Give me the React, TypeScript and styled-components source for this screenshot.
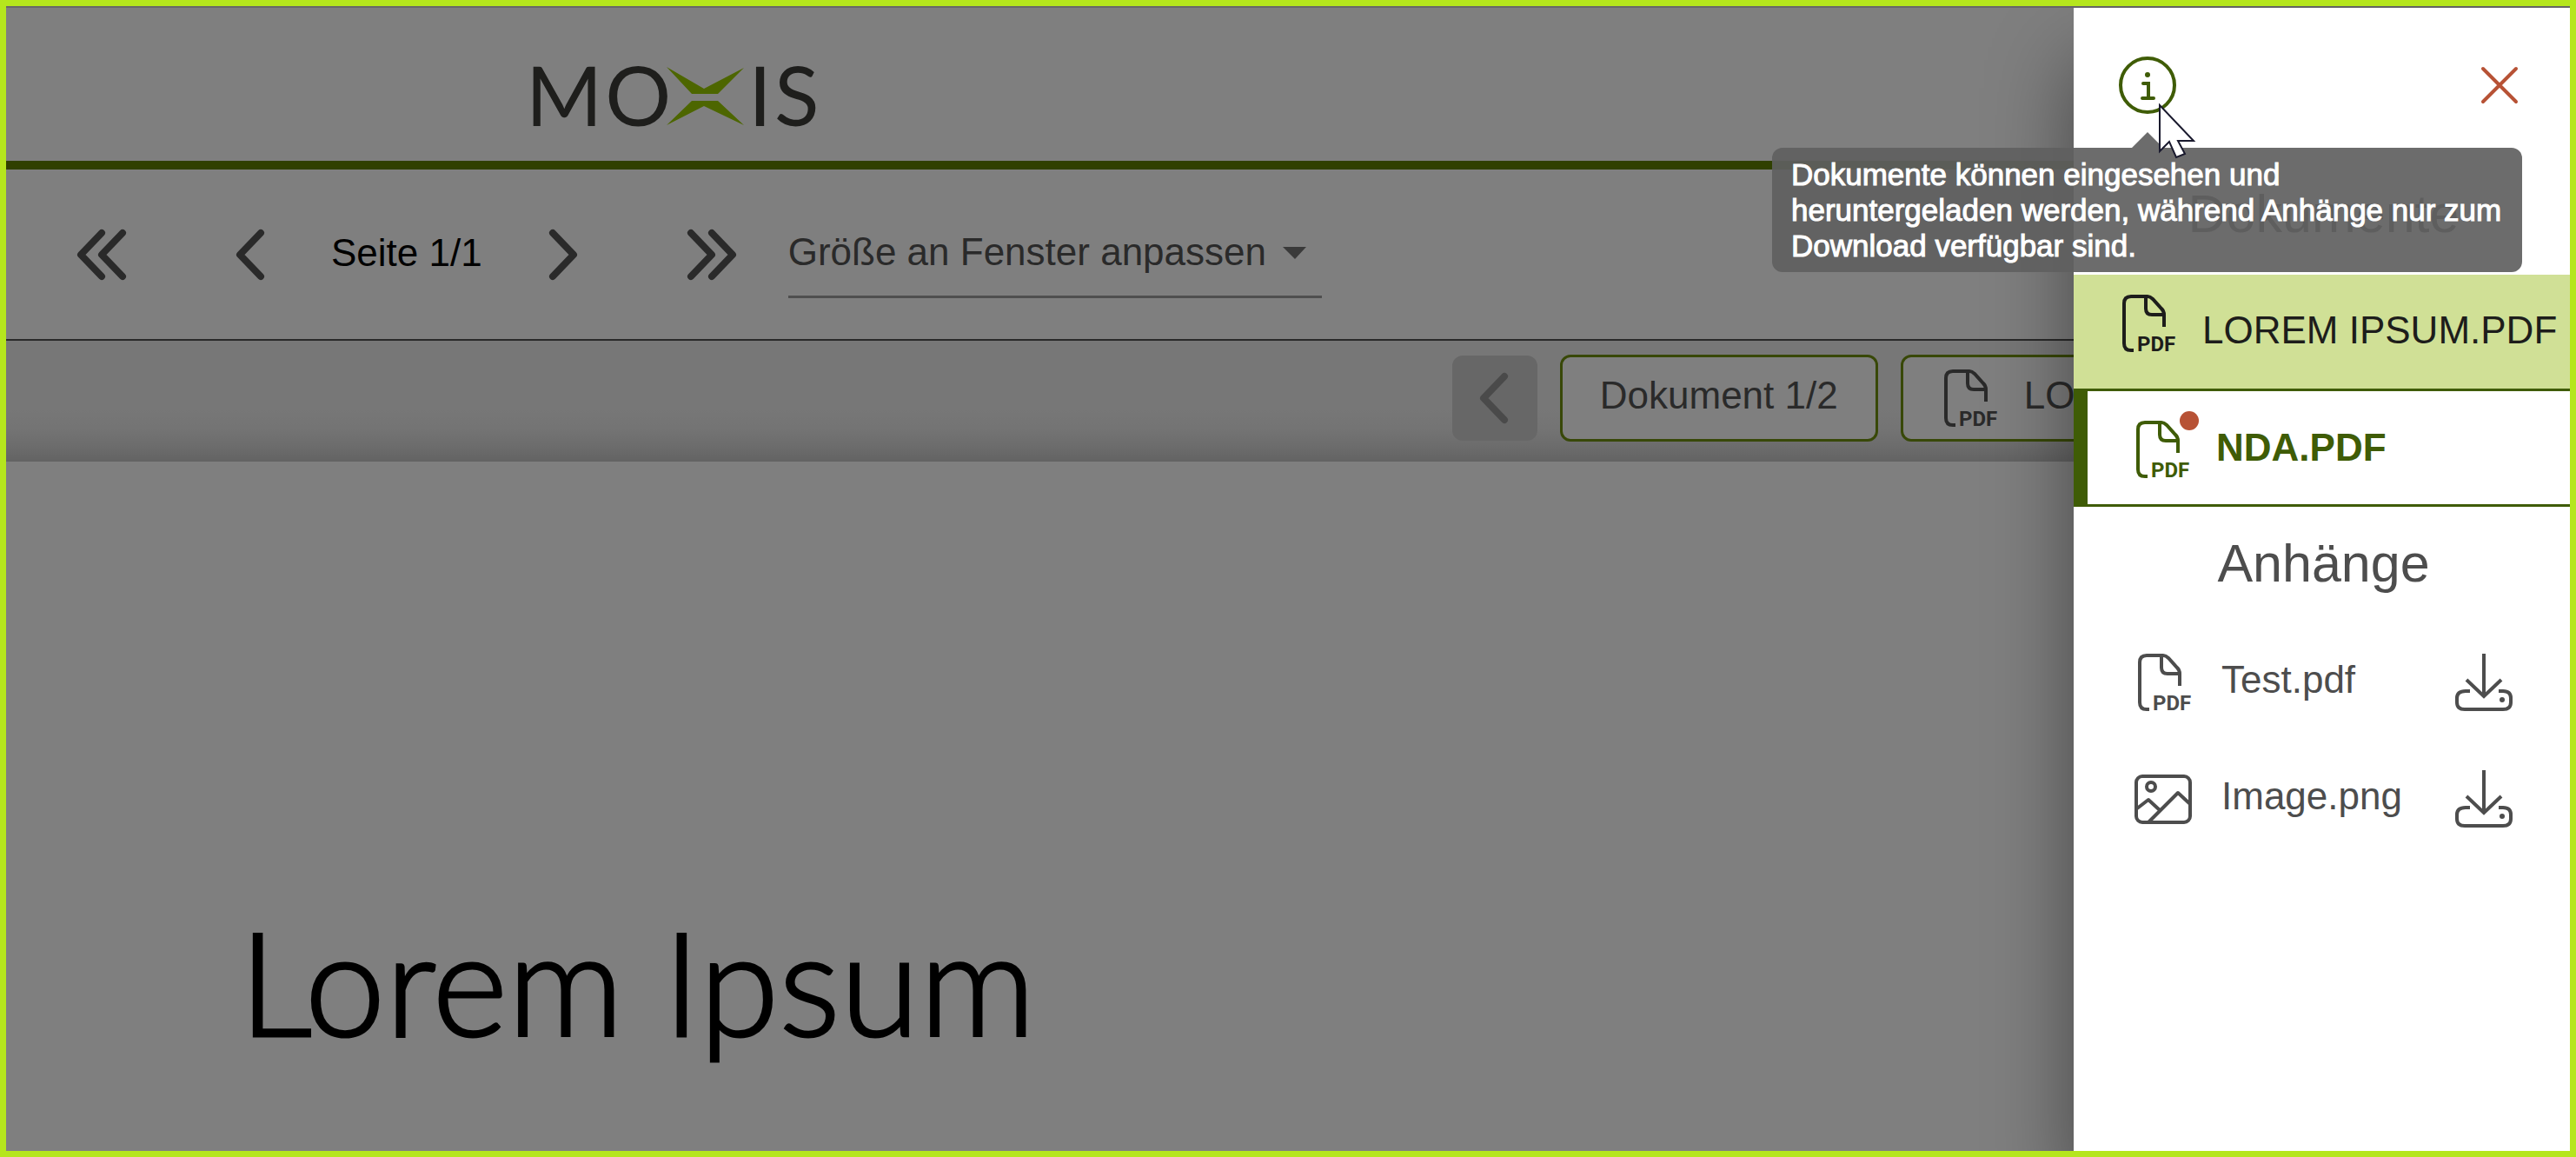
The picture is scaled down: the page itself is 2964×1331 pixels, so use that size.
import React, { useState } from "react";
import styled, { createGlobalStyle, css } from "styled-components";

const sans = `"Liberation Sans", Arial, Helvetica, sans-serif`;
const humanist = `Lato, "Open Sans", sans-serif`;

const color = {
  frame: "#b5e61d",
  brand: "#608000",
  logoGreen: "#9acc00",
  deepGreen: "#3f5c06",
  highlight: "#d0e096",
  alert: "#b75235",
  ink: "#555555",
  muted: "#4d4d4d",
};

const GlobalStyle = createGlobalStyle`
  *, *::before, *::after { box-sizing: border-box; }
  body { margin: 0; font-family: ${sans}; font-size: 44px; line-height: 50px; }
  button, select { font: inherit; color: inherit; }
  h1, h2, p, ul { margin: 0; padding: 0; font-weight: 400; }
  ul { list-style: none; }
  svg { display: block; flex: none; overflow: visible; }
`;

const Frame = styled.div`
  position: relative;
  display: flex;
  flex-direction: column;
  min-height: 100vh;
  border: 7px solid ${color.frame};
  background: #fff;
  overflow: hidden;
`;

const Header = styled.header`
  height: 188px;
  padding: 42px 0 0 598px;
  border-top: 2px solid #d0d0d0;
  border-bottom: 10px solid ${color.brand};
`;

const Logo = styled.div`
  display: flex;
  align-items: baseline;
  gap: 3px;
  font: 400 95px/114px ${humanist};
  color: #3c3c38;
  & > svg { margin: 0 2px 0 -8px; }
`;

const Toolbar = styled.div`
  display: flex;
  align-items: center;
  height: 197px;
  padding-left: 74px;
  border-bottom: 2px solid ${color.ink};
  color: ${color.ink};
`;

const Pager = styled.nav`
  display: flex;
  align-items: center;
  gap: 100px;
  margin-right: 52px;
`;

const PageStep = styled.div`
  display: flex;
  align-items: center;
  gap: 56px;
`;

const PageLabel = styled.span`
  padding-bottom: 4px;
  color: #000;
`;

const IconButton = styled.button<{ $size: number }>`
  display: flex;
  align-items: center;
  justify-content: center;
  width: ${(p) => p.$size}px;
  height: ${(p) => p.$size}px;
  padding: 0;
  border: 0;
  background: none;
  cursor: pointer;
`;

const ZoomField = styled.label`
  display: grid;
  align-items: center;
  width: 614px;
  height: 100px;
  border-bottom: 3px solid #9e9e9e;
  & > * { grid-area: 1 / 1; }
  & > svg { justify-self: end; margin-right: 18px; pointer-events: none; }
`;

const ZoomSelect = styled.select`
  width: 100%;
  height: 54px;
  padding: 0 0 2px;
  border: 0;
  background: none;
  appearance: none;
`;

const DocumentBar = styled.div`
  display: flex;
  align-items: center;
  justify-content: flex-end;
  gap: 26px;
  height: 139px;
  padding: 0 50px 8px 0;
  background: linear-gradient(#efefef 0 55%, #e8e8e8 73%, #d8d8d8 88%, #c6c6c6);
  color: ${color.ink};
`;

const DocStepButton = styled.button`
  display: flex;
  align-items: center;
  justify-content: center;
  width: 98px;
  height: 98px;
  padding: 0;
  border: 0;
  border-radius: 12px;
  background: #cecece;
  color: #959595;
`;

const DocChip = styled.button`
  display: flex;
  align-items: center;
  gap: 30px;
  height: 100px;
  padding: 0 43px;
  border: 3px solid #709010;
  border-radius: 12px;
  background: #fff;
  white-space: nowrap;
`;

const ChipText = styled.span`
  padding-bottom: 6px;
`;

const Sheet = styled.main`
  flex: 1;
  padding: 497px 0 0 268px;
`;

const SheetTitle = styled.h1`
  font: 300 166px/200px ${humanist};
  color: #000;
  -webkit-text-stroke: 3px #000;
`;

const Backdrop = styled.div`
  position: absolute;
  inset: 0;
  background: rgba(0, 0, 0, 0.5);
`;

const Drawer = styled.aside`
  position: absolute;
  top: 2px;
  right: 0;
  bottom: 0;
  width: 571px;
  background: #fff;
  box-shadow: 0 60px 90px rgba(0, 0, 0, 0.44);
  color: ${color.muted};
`;

const DrawerHead = styled.div`
  display: flex;
  justify-content: space-between;
  padding: 56px 48px 50px 52px;
`;

const InfoAnchor = styled.div`
  position: relative;
  color: ${color.deepGreen};
`;

const CloseButton = styled(IconButton)`
  color: ${color.alert};
`;

const Tooltip = styled.div`
  position: absolute;
  z-index: 1;
  top: 105px;
  left: -399px;
  width: 863px;
  padding: 10px 18px 10px 22px;
  border-radius: 12px;
  background: rgba(95, 95, 95, 0.92);
  color: #fff;
  font-size: 35px;
  line-height: 41px;
  -webkit-text-stroke: 1px #fff;
  &::before {
    content: "";
    position: absolute;
    bottom: 100%;
    left: 414px;
    border: solid transparent;
    border-width: 0 18px 18px;
    border-bottom-color: rgba(95, 95, 95, 0.92);
  }
`;

const Pointer = styled.svg`
  position: absolute;
  z-index: 2;
  top: 55px;
  left: 46px;
`;

const SectionTitle = styled.h2`
  padding: 29px 0 34px 4px;
  font-size: 61px;
  line-height: 72px;
  text-align: center;
`;

const DocumentRow = styled.button<{ $current?: boolean }>`
  display: flex;
  align-items: center;
  gap: 30px;
  width: 100%;
  height: 134px;
  padding: 0 0 4px 52px;
  border: 0;
  border-bottom: 3px solid ${color.deepGreen};
  background: ${color.highlight};
  color: #1d1d1b;
  text-align: left;
  white-space: nowrap;
  cursor: pointer;
  & > svg { margin-bottom: 16px; }
  ${(p) =>
    p.$current &&
    css`
      height: 133px;
      border-left: 16px solid ${color.deepGreen};
      background: #fff;
      color: ${color.deepGreen};
      font-weight: 700;
      padding-bottom: 0;
      & > svg { margin: 4px 0 0; }
    `}
`;

const Attachment = styled.li`
  display: flex;
  align-items: center;
  gap: 34px;
  height: 134px;
  padding: 0 66px 0 70px;
`;

const FileName = styled.span`
  flex: 1;
  padding-bottom: 6px;
`;

const Chevron = ({ double = false, flip = false }: { double?: boolean; flip?: boolean }) => (
  <svg
    width={double ? 58 : 36}
    height="60"
    viewBox={double ? "0 0 58 60" : "0 0 36 60"}
    fill="none"
    stroke="currentColor"
    strokeWidth="8"
    strokeLinecap="round"
    strokeLinejoin="round"
    transform={flip ? "scale(-1 1)" : undefined}
    aria-hidden="true"
  >
    <path d={double ? "M29 5 5 30 29 55M53 5 29 30 53 55" : "M29 5 5 30 29 55"} />
  </svg>
);

const PdfIcon = ({ alert = false }: { alert?: boolean }) => (
  <svg width="66" height="66" viewBox="0 0 66 66" fill="none" stroke="currentColor" strokeWidth="4" aria-hidden="true">
    <path d="M17 64H14Q6 64 6 56V10Q6 2 14 2H33Q36 2 39 5L49 16Q52 19 52 23V37" />
    <path d="M31 2V16Q31 23 38 23H52" />
    <text x="21" y="65" fill="currentColor" stroke="none" fontFamily="Roboto, sans-serif" fontWeight="700" fontSize="24">
      PDF
    </text>
    {alert && <circle cx="65" cy="0" r="11" fill={color.alert} stroke="none" />}
  </svg>
);

const ImageIcon = () => (
  <svg width="66" height="66" viewBox="0 0 66 66" fill="none" stroke="currentColor" strokeWidth="4" strokeLinejoin="round" aria-hidden="true">
    <rect x="2" y="7" width="62" height="53" rx="7" />
    <circle cx="19" cy="19" r="5" />
    <path d="M3 44 16 34 29 46M16 60 50 26 64 39" />
  </svg>
);

const DownloadIcon = () => (
  <svg width="66" height="66" viewBox="0 0 66 66" fill="none" stroke="currentColor" strokeWidth="4" aria-hidden="true">
    <path d="M33 0V48M13 30 33 49 53 30" />
    <path d="M17 43H12Q2 43 2 51V56Q2 64 11 64H55Q64 64 64 56V51Q64 43 55 43H50" />
    <circle cx="54" cy="53" r="3" fill="currentColor" stroke="none" />
  </svg>
);

const InfoIcon = () => (
  <svg width="66" height="66" viewBox="0 0 66 66" fill="none" stroke="currentColor" strokeWidth="4" strokeLinecap="round" aria-hidden="true">
    <circle cx="33" cy="33" r="31" />
    <circle cx="33" cy="21" r="3" fill="currentColor" stroke="none" />
    <path d="M28 31H34V48M27 48H40" />
  </svg>
);

const CloseIcon = () => (
  <svg width="42" height="42" viewBox="0 0 42 42" stroke="currentColor" strokeWidth="4" strokeLinecap="round" aria-hidden="true">
    <path d="M2 2 40 40M40 2 2 40" />
  </svg>
);

const LogoMark = () => (
  <svg width="89" height="68" viewBox="0 0 89 68" fill={color.logoGreen} aria-hidden="true">
    <path d="M0 0 43 25 89 1 59 31H29ZM29 39H59L89 67 43 45 0 67Z" />
  </svg>
);

const documents = [
  { name: "LOREM IPSUM.PDF", current: false },
  { name: "NDA.PDF", current: true },
];

const attachments = [
  { name: "Test.pdf", Icon: PdfIcon },
  { name: "Image.png", Icon: ImageIcon },
];

export default function App() {
  const [zoom, setZoom] = useState("fit");

  return (
    <Frame>
      <GlobalStyle />
      <Header>
        <Logo>
          <span>M</span>
          <span>O</span>
          <LogoMark />
          <span>I</span>
          <span>S</span>
        </Logo>
      </Header>

      <Toolbar>
        <Pager aria-label="Seiten">
          <IconButton $size={72} aria-label="Erste Seite"><Chevron double /></IconButton>
          <PageStep>
            <IconButton $size={72} aria-label="Vorherige Seite"><Chevron /></IconButton>
            <PageLabel>Seite 1/1</PageLabel>
            <IconButton $size={72} aria-label="Nächste Seite"><Chevron flip /></IconButton>
          </PageStep>
          <IconButton $size={72} aria-label="Letzte Seite"><Chevron double flip /></IconButton>
        </Pager>
        <ZoomField>
          <ZoomSelect aria-label="Zoom" value={zoom} onChange={(e) => setZoom(e.target.value)}>
            <option value="fit">Größe an Fenster anpassen</option>
          </ZoomSelect>
          <svg width="27" height="14" viewBox="0 0 27 14" fill="#757575" aria-hidden="true">
            <path d="M0 0H27L14 14Z" />
          </svg>
        </ZoomField>
      </Toolbar>

      <DocumentBar>
        <DocStepButton disabled aria-label="Vorheriges Dokument"><Chevron /></DocStepButton>
        <DocChip><ChipText>Dokument 1/2</ChipText></DocChip>
        <DocChip>
          <PdfIcon />
          <ChipText>LOREM IPSUM.PDF</ChipText>
        </DocChip>
        <DocStepButton aria-label="Nächstes Dokument"><Chevron flip /></DocStepButton>
      </DocumentBar>

      <Sheet>
        <SheetTitle>Lorem Ipsum</SheetTitle>
      </Sheet>

      <Backdrop />

      <Drawer>
        <DrawerHead>
          <InfoAnchor>
            <IconButton $size={66} aria-label="Information" aria-describedby="info-tip"><InfoIcon /></IconButton>
            <Tooltip id="info-tip" role="tooltip">
              Dokumente können eingesehen und heruntergeladen werden, während Anhänge nur zum Download verfügbar sind.
            </Tooltip>
            <Pointer width="42" height="62" viewBox="0 0 42 62" fill="#fff" stroke="#1a1a2e" strokeWidth="2" aria-hidden="true">
              <path d="M1 1V54L12 43 20 61 30 57 22 42H40Z" />
            </Pointer>
          </InfoAnchor>
          <CloseButton $size={66} aria-label="Schließen"><CloseIcon /></CloseButton>
        </DrawerHead>

        <SectionTitle>Dokumente</SectionTitle>
        {documents.map((doc) => (
          <DocumentRow key={doc.name} $current={doc.current}>
            <PdfIcon alert={doc.current} />
            <span>{doc.name}</span>
          </DocumentRow>
        ))}

        <SectionTitle>Anhänge</SectionTitle>
        <ul>
          {attachments.map(({ name, Icon }) => (
            <Attachment key={name}>
              <Icon />
              <FileName>{name}</FileName>
              <IconButton $size={66} aria-label={`${name} herunterladen`}><DownloadIcon /></IconButton>
            </Attachment>
          ))}
        </ul>
      </Drawer>
    </Frame>
  );
}
